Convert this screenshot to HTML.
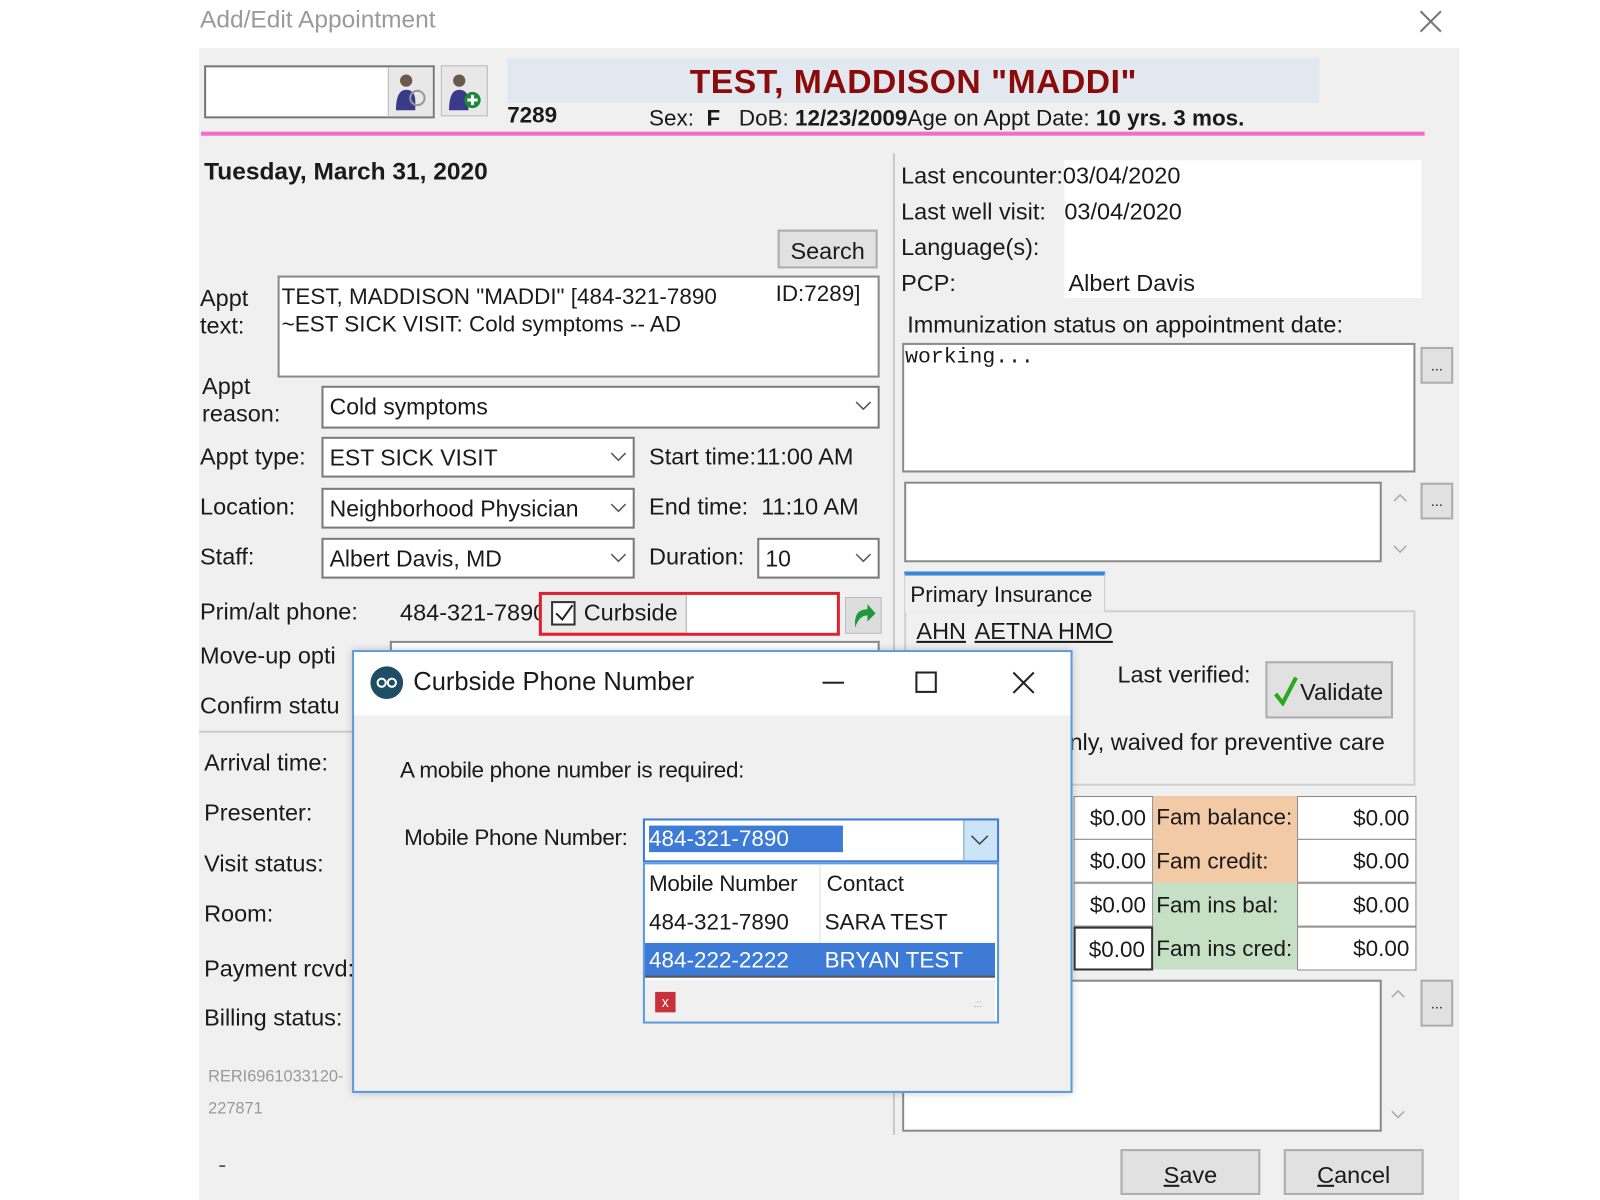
<!DOCTYPE html>
<html><head><meta charset="utf-8"><style>
*{box-sizing:border-box;margin:0;padding:0}
body{width:1600px;height:1200px;background:#fff;position:relative;overflow:hidden;font-family:"Liberation Sans",sans-serif;font-size:23px;color:#1a1a1a}
#w{position:absolute;left:0;top:0;width:1570px;height:1176px;transform:scale(1.0205);transform-origin:0 0}
.a{position:absolute;white-space:nowrap;line-height:1}
.box{position:absolute;background:#fff;border:2px solid #8a8a8a}
.sel{position:absolute;background:#fff;border:2px solid #7a7a7a;padding:8px 0 0 6px;font-size:22.5px;line-height:1;white-space:nowrap}
.sel svg{position:absolute;right:6px;top:13px}
.btn{position:absolute;background:#e1e1e1;border:2px solid #adadad;text-align:center;font-size:23px}
.tv{text-align:right;padding-right:6px;padding-top:8px;font-size:22px}
</style></head><body><div id="w">
<div class="a" style="left:196px;top:8px;font-size:24px;color:#9a9a9a">Add/Edit Appointment</div>
<svg class="a" style="left:1390px;top:9px" width="24" height="24"><path d="M2 2L22 22M22 2L2 22" stroke="#777" stroke-width="2"/></svg>
<div class="a" style="left:195px;top:47px;width:1235px;height:1129px;background:#f0f0f0"></div>

<div class="box" style="left:200px;top:64px;width:226px;height:52px;border-color:#777"></div>
<div class="a" style="left:380px;top:66px;width:44px;height:48px;background:#e8e8e8;border-left:1px solid #bbb"></div>
<svg class="a" style="left:385px;top:70px" width="34" height="40"><circle cx="13" cy="9" r="6" fill="#6b5a4a"/><path d="M3 38 Q3 18 13 18 Q22 18 22 30 L22 38Z" fill="#3a3a8a"/><circle cx="24" cy="26" r="7" fill="none" stroke="#999" stroke-width="2"/></svg>
<div class="a" style="left:432px;top:64px;width:46px;height:50px;background:#e8e8e8;border:1px solid #bbb"></div>
<svg class="a" style="left:437px;top:70px" width="36" height="40"><circle cx="13" cy="9" r="6" fill="#6b5a4a"/><path d="M3 38 Q3 18 13 18 Q22 18 22 30 L22 38Z" fill="#3a3a8a"/><circle cx="26" cy="28" r="8" fill="#1a8a3a"/><path d="M26 23V33M21 28H31" stroke="#fff" stroke-width="3"/></svg>

<div class="a" style="left:497px;top:57px;width:796px;height:44px;background:#e2e8f0"></div>
<div class="a" style="left:497px;top:63px;width:796px;text-align:center;font-size:33px;font-weight:bold;color:#8b0a0a;letter-spacing:0.5px">TEST, MADDISON "MADDI"</div>
<div class="a" style="left:497px;top:102px;font-weight:bold;font-size:22px">7289</div>
<div class="a" style="left:636px;top:105px;font-size:22px">Sex:&nbsp; <b>F</b> &nbsp; DoB: <b>12/23/2009</b>Age on Appt Date: <b>10 yrs. 3 mos.</b></div>
<div class="a" style="left:197px;top:129px;width:1199px;height:4px;background:#f46fc3"></div>

<div class="a" style="left:200px;top:157px;font-size:24px;font-weight:bold">Tuesday, March 31, 2020</div>
<div class="btn" style="left:762px;top:225px;width:98px;height:38px;padding-top:6px">Search</div>

<div class="a" style="left:196px;top:279px;line-height:27px">Appt<br>text:</div>
<div class="box" style="left:272px;top:270px;width:590px;height:100px"></div>
<div class="a" style="left:276px;top:277px;line-height:27px;font-size:22px">TEST, MADDISON "MADDI" [484-321-7890<br>~EST SICK VISIT: Cold symptoms -- AD</div>
<div class="a" style="left:760px;top:277px;font-size:22px">ID:7289]</div>

<div class="a" style="left:198px;top:365px;line-height:27px">Appt<br>reason:</div>
<div class="sel" style="left:315px;top:378px;width:547px;height:42px">Cold symptoms<svg width="16" height="10"><path d="M1 1L8 8L15 1" stroke="#555" fill="none" stroke-width="1.5"/></svg></div>
<div class="a" style="left:196px;top:436px">Appt type:</div>
<div class="sel" style="left:315px;top:428px;width:307px;height:40px">EST SICK VISIT<svg width="16" height="10"><path d="M1 1L8 8L15 1" stroke="#555" fill="none" stroke-width="1.5"/></svg></div>
<div class="a" style="left:636px;top:436px">Start time:11:00 AM</div>
<div class="a" style="left:196px;top:485px">Location:</div>
<div class="sel" style="left:315px;top:478px;width:307px;height:40px">Neighborhood Physician<svg width="16" height="10"><path d="M1 1L8 8L15 1" stroke="#555" fill="none" stroke-width="1.5"/></svg></div>
<div class="a" style="left:636px;top:485px">End time:&nbsp; 11:10 AM</div>
<div class="a" style="left:196px;top:534px">Staff:</div>
<div class="sel" style="left:315px;top:527px;width:307px;height:40px">Albert Davis, MD<svg width="16" height="10"><path d="M1 1L8 8L15 1" stroke="#555" fill="none" stroke-width="1.5"/></svg></div>
<div class="a" style="left:636px;top:534px">Duration:</div>
<div class="sel" style="left:742px;top:527px;width:120px;height:40px">10<svg width="16" height="10"><path d="M1 1L8 8L15 1" stroke="#555" fill="none" stroke-width="1.5"/></svg></div>

<div class="a" style="left:196px;top:588px">Prim/alt phone:</div>
<div class="a" style="left:392px;top:589px">484-321-7890</div>
<div class="a" style="left:528px;top:580px;width:295px;height:43px;background:#ebebeb;border:3px solid #e0202e"></div>
<div class="a" style="left:672px;top:583px;width:148px;height:37px;background:#fff;border-left:1px solid #aaa"></div>
<div class="a" style="left:540px;top:589px;width:24px;height:24px;border:2px solid #333;background:#fff"></div>
<svg class="a" style="left:542px;top:590px" width="22" height="22"><path d="M3 11L9 17L19 3" stroke="#222" fill="none" stroke-width="2"/></svg>
<div class="a" style="left:572px;top:589px">Curbside</div>
<div class="a" style="left:828px;top:585px;width:36px;height:36px;background:#ddd;border:1px solid #bbb"></div>
<svg class="a" style="left:832px;top:589px" width="28" height="28"><path d="M6 26 Q4 8 18 8 L18 3 L26 12 L18 20 L18 14 Q10 14 6 26Z" fill="#1e9a3a"/></svg>

<div class="a" style="left:196px;top:631px">Move-up opti</div>
<div class="box" style="left:382px;top:628px;width:480px;height:20px;border-bottom:none"></div>
<div class="a" style="left:196px;top:680px">Confirm statu</div>
<div class="a" style="left:195px;top:716px;width:155px;height:2px;background:#ccc"></div>
<div class="a" style="left:200px;top:736px">Arrival time:</div>
<div class="a" style="left:200px;top:785px">Presenter:</div>
<div class="a" style="left:200px;top:835px">Visit status:</div>
<div class="a" style="left:200px;top:884px">Room:</div>
<div class="a" style="left:200px;top:938px">Payment rcvd:</div>
<div class="a" style="left:200px;top:986px">Billing status:</div>
<div class="a" style="left:204px;top:1048px;font-size:16px;color:#999">RERI6961033120-</div>
<div class="a" style="left:204px;top:1079px;font-size:16px;color:#999">227871</div>
<div class="a" style="left:214px;top:1130px;color:#555">-</div>

<div class="a" style="left:875px;top:150px;width:2px;height:962px;background:#c8c8c8"></div>

<div class="a" style="left:1043px;top:157px;width:350px;height:135px;background:#fff"></div>
<div class="a" style="left:883px;top:161px">Last encounter:03/04/2020</div>
<div class="a" style="left:883px;top:196px">Last well visit:</div>
<div class="a" style="left:1043px;top:196px">03/04/2020</div>
<div class="a" style="left:883px;top:231px">Language(s):</div>
<div class="a" style="left:883px;top:266px">PCP:</div>
<div class="a" style="left:1047px;top:266px">Albert Davis</div>
<div class="a" style="left:889px;top:307px">Immunization status on appointment date:</div>
<div class="box" style="left:884px;top:336px;width:503px;height:127px"></div>
<div class="a" style="left:887px;top:340px;font-family:'Liberation Mono',monospace;font-size:21px">working...</div>
<div class="btn" style="left:1392px;top:340px;width:32px;height:36px;font-size:14px;padding-top:8px">...</div>
<div class="box" style="left:886px;top:472px;width:468px;height:79px"></div>
<svg class="a" style="left:1364px;top:482px" width="16" height="62"><path d="M2 9L8 3L14 9M2 53L8 59L14 53" stroke="#aaa" fill="none" stroke-width="1.5"/></svg>
<div class="btn" style="left:1392px;top:473px;width:32px;height:36px;font-size:14px;padding-top:8px">...</div>

<div class="a" style="left:886px;top:598px;width:501px;height:172px;border:2px solid #d0d0d0"></div>
<div class="a" style="left:886px;top:560px;width:197px;height:40px;background:#f0f0f0;border:1px solid #ccc;border-top:4px solid #3a86d8;border-bottom:none"></div>
<div class="a" style="left:892px;top:572px;font-size:22px">Primary Insurance</div>
<div class="a" style="left:898px;top:607px;text-decoration:underline">AHN</div>
<div class="a" style="left:955px;top:607px;text-decoration:underline">AETNA HMO</div>
<div class="a" style="left:1095px;top:650px">Last verified:</div>
<div class="btn" style="left:1240px;top:648px;width:125px;height:56px;padding-top:15px;padding-left:32px;text-align:left">Validate</div>
<svg class="a" style="left:1248px;top:662px" width="24" height="30"><path d="M2 18L9 27L22 2" stroke="#2aa820" fill="none" stroke-width="4"/></svg>
<div class="a" style="left:1048px;top:716px">nly, waived for preventive care</div>

<div class="a" style="left:1130px;top:780px;width:141px;height:85px;background:#f2caa6"></div>
<div class="a" style="left:1130px;top:865px;width:141px;height:85px;background:#c6e0c6"></div>
<div class="box tv" style="left:1052px;top:780px;width:78px;height:43px;border-width:1px">$0.00</div>
<div class="box tv" style="left:1052px;top:822px;width:78px;height:43px;border-width:1px">$0.00</div>
<div class="box tv" style="left:1052px;top:865px;width:78px;height:43px;border-width:1px">$0.00</div>
<div class="box tv" style="left:1052px;top:908px;width:78px;height:43px;border-color:#333">$0.00</div>
<div class="a" style="left:1133px;top:790px;font-size:22px">Fam balance:</div>
<div class="a" style="left:1133px;top:833px;font-size:22px">Fam credit:</div>
<div class="a" style="left:1133px;top:876px;font-size:22px">Fam ins bal:</div>
<div class="a" style="left:1133px;top:919px;font-size:22px">Fam ins cred:</div>
<div class="box tv" style="left:1271px;top:780px;width:117px;height:43px;border-width:1px">$0.00</div>
<div class="box tv" style="left:1271px;top:822px;width:117px;height:43px;border-width:1px">$0.00</div>
<div class="box tv" style="left:1271px;top:865px;width:117px;height:43px;border-width:1px">$0.00</div>
<div class="box tv" style="left:1271px;top:908px;width:117px;height:43px;border-width:1px">$0.00</div>

<div class="box" style="left:884px;top:960px;width:470px;height:149px"></div>
<svg class="a" style="left:1362px;top:968px" width="16" height="132"><path d="M2 9L8 3L14 9M2 121L8 127L14 121" stroke="#aaa" fill="none" stroke-width="1.5"/></svg>
<div class="btn" style="left:1392px;top:960px;width:32px;height:46px;font-size:14px;padding-top:13px">...</div>
<div class="btn" style="left:1098px;top:1126px;width:137px;height:45px;padding-top:10px"><u>S</u>ave</div>
<div class="btn" style="left:1258px;top:1126px;width:137px;height:45px;padding-top:10px"><u>C</u>ancel</div>

<!-- popup dialog -->
<div class="a" style="left:345px;top:637px;width:706px;height:434px;background:#f0f0f0;border:2px solid #5b9bdc;box-shadow:0 0 8px rgba(0,0,0,.2)"></div>
<div class="a" style="left:347px;top:639px;width:702px;height:62px;background:#fff"></div>
<svg class="a" style="left:362px;top:652px" width="34" height="34"><circle cx="17" cy="17" r="16" fill="#1f4d66"/><circle cx="12" cy="17" r="4" fill="none" stroke="#fff" stroke-width="2"/><circle cx="22" cy="17" r="4" fill="none" stroke="#fff" stroke-width="2"/></svg>
<div class="a" style="left:405px;top:656px;font-size:25px">Curbside Phone Number</div>
<div class="a" style="left:806px;top:668px;width:21px;height:2px;background:#222"></div>
<div class="a" style="left:897px;top:658px;width:21px;height:21px;border:2px solid #222"></div>
<svg class="a" style="left:991px;top:657px" width="24" height="24"><path d="M2 2L22 22M22 2L2 22" stroke="#222" stroke-width="2"/></svg>
<div class="a" style="left:392px;top:744px;font-size:22px;letter-spacing:-.3px">A mobile phone number is required:</div>
<div class="a" style="left:396px;top:810px;font-size:22px;letter-spacing:-.3px">Mobile Phone Number:</div>
<div class="a" style="left:630px;top:802px;width:349px;height:43px;background:#fff;border:2px solid #3d7bd6"></div>
<div class="a" style="left:636px;top:809px;width:190px;height:26px;background:#3d7bd6;color:#fff;font-size:22px;padding-top:2px">484-321-7890</div>
<div class="a" style="left:944px;top:804px;width:33px;height:39px;background:#cce4f7;border-left:1px solid #7aa"></div>
<svg class="a" style="left:951px;top:818px" width="18" height="11"><path d="M1 1L9 9L17 1" stroke="#444" fill="none" stroke-width="1.5"/></svg>
<div class="a" style="left:630px;top:845px;width:349px;height:158px;background:#fff;border:2px solid #5b9bdc"></div>
<div class="a" style="left:803px;top:848px;width:1px;height:110px;background:#ddd"></div>
<div class="a" style="left:636px;top:855px;font-size:22px;letter-spacing:-.3px">Mobile Number</div>
<div class="a" style="left:810px;top:855px;font-size:22px">Contact</div>
<div class="a" style="left:636px;top:893px;font-size:22px">484-321-7890</div>
<div class="a" style="left:808px;top:893px;font-size:22px">SARA TEST</div>
<div class="a" style="left:632px;top:924px;width:343px;height:34px;background:#3d7bd6;border-bottom:2px solid #555"></div>
<div class="a" style="left:636px;top:930px;color:#fff;font-size:22px">484-222-2222</div>
<div class="a" style="left:808px;top:930px;color:#fff;font-size:22px">BRYAN TEST</div>
<div class="a" style="left:632px;top:960px;width:343px;height:41px;background:#f0f0f0"></div>
<div class="a" style="left:642px;top:972px;width:20px;height:20px;background:#c8303a;color:#fff;font-size:14px;text-align:center;padding-top:3px">x</div>
<div class="a" style="left:954px;top:980px;font-size:10px;color:#999">.::</div>
</div></body></html>
